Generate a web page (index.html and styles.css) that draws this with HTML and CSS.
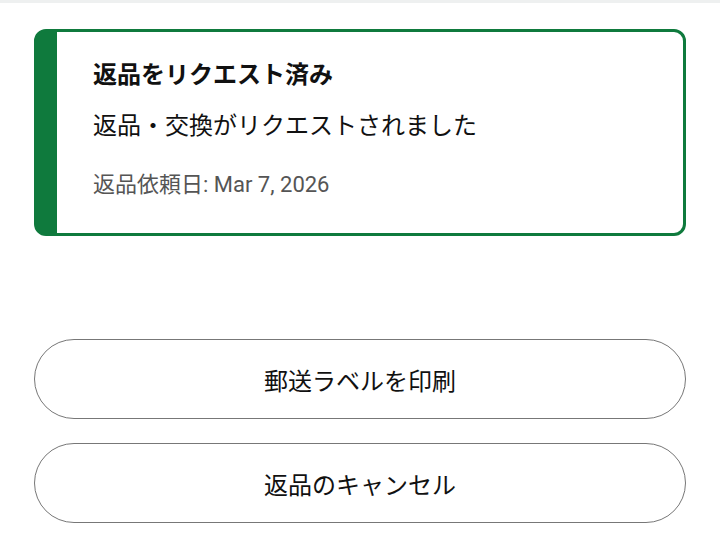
FILE: index.html
```html
<!DOCTYPE html>
<html lang="ja">
<head>
    <meta charset="UTF-8">
    <meta name="viewport" content="width=device-width, initial-scale=1.0">
    <title>返品をリクエスト済み</title>
    <link rel="stylesheet" href="styles.css">
</head>
<body>

<div class="top-bar"></div>

<div class="page">
    <div class="status-card">
        <h2 class="status-title">返品をリクエスト済み</h2>
        <p class="status-text">返品・交換がリクエストされました</p>
        <p class="status-date">返品依頼日: Mar 7, 2026</p>
    </div>

    <div class="actions">
        <button class="action-btn">郵送ラベルを印刷</button>
        <button class="action-btn">返品のキャンセル</button>
    </div>
</div>

</body>
</html>
```

FILE: styles.css
```css
body {
    margin: 0;
    background: #fff;
    font-family: Roboto, "Noto Sans CJK JP", sans-serif;
    color: #111;
}
.top-bar {
    height: 3px;
    background: #eef0f0;
}
.page {
    padding: 26px 34px 0 34px;
}
.status-card {
    border: 3px solid #0f7a3d;
    border-left-width: 23px;
    border-radius: 12px;
    padding: 27px 20px 34px 36px;
}
.status-title {
    margin: 0;
    font-size: 24px;
    line-height: 32px;
    font-weight: bold;
}
.status-text {
    margin: 19px 0 0 0;
    font-size: 24px;
    line-height: 32px;
}
.status-date {
    margin: 29px 0 0 0;
    font-size: 22px;
    line-height: 28px;
    color: #555;
}
.actions {
    display: flex;
    flex-direction: column;
    gap: 24px;
    margin-top: 103px;
}
.action-btn {
    height: 80px;
    border: 1px solid #777;
    border-radius: 40px;
    background: #fff;
    font-family: Roboto, "Noto Sans CJK JP", sans-serif;
    font-size: 24px;
    color: #111;
    cursor: pointer;
}
```
